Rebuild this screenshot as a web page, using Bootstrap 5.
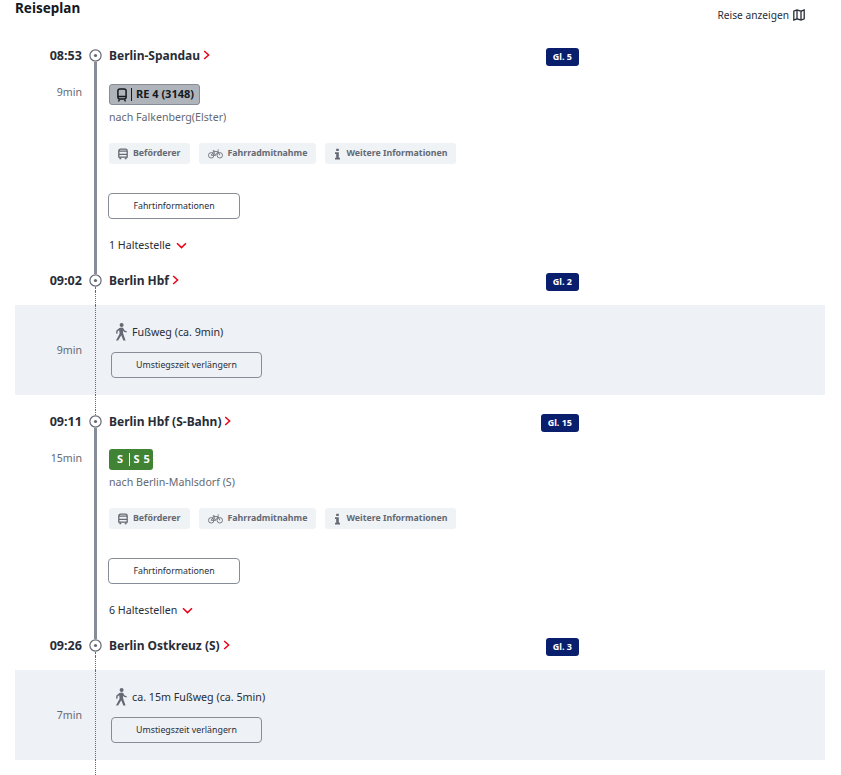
<!DOCTYPE html>
<html lang="de">
<head>
  <meta charset="UTF-8" />
  <title>Reiseplan</title>
  <link href="https://cdn.jsdelivr.net/npm/bootstrap@5.3.0/dist/css/bootstrap.min.css" rel="stylesheet" />
  <style>
    body { font-family: "Noto Sans", "Liberation Sans", sans-serif; font-size: 11px; color: #282d37; background: #fff; overflow: hidden; }
    .plan { width: 841px; height: 775px; overflow: hidden; padding: 0 16px 0 15px; }
    .plan-head { height: 44px; }
    .plan-title { font-size: 13.5px; font-weight: 700; line-height: 17px; margin: 0; color: #131821; }
    .map-link { color: #282d37; font-size: 10.2px; text-decoration: none; padding: 8px 20px 0 0; line-height: 14px; }
    .time-col { width: 67px; flex: none; text-align: right; }
    .rail { width: 27px; flex: none; }
    .rail-solid, .rail-dots { flex: 1 1 0; width: 0; }
    .rail-solid { border-left: 3px solid #878c96; }
    .rail-dots { border-left: 1px dotted #646973; }
    .stop-row { height: 22px; width: 564px; }
    .stop-time { font-size: 12.6px; font-weight: 700; line-height: 24px; }
    .stop-name { font-size: 12px; font-weight: 700; line-height: 22px; padding-top: 2px; }
    .stop-dot { width: 13px; height: 13px; flex: none; }
    .chev { width: 7px; height: 10px; margin-top: -3px; margin-left: -1px; }
    .chev-down { width: 11px; height: 7px; }
    .track { background: #0a1e6e; color: #fff; font-size: 9px; font-weight: 700; height: 18px; line-height: 18px; padding: 0 7px; border-radius: 3px; margin-top: 4px; }
    .leg-row { height: 202px; }
    .leg-row.first-leg { height: 203px; }
    .leg-time { color: #646973; font-size: 10.6px; line-height: 14px; padding-top: 19px; }
    .leg-body { padding-top: 17px; }
    .first-leg .leg-body { padding-top: 18px; }
    .line-tag { height: 21px; font-weight: 700; font-size: 11px; border-radius: 3px; padding: 0 5px 0 7px; }
    .line-re { background: #afb4bb; border: 1px solid #878c96; width: 91px; color: #131821; }
    .line-s { background: #408335; color: #fff; width: 44px; padding: 0 0 0 8px; font-size: 11px; }
    .line-s i { font-style: normal; letter-spacing: .5px; }
    .line-bar { border-left: 1px solid currentColor; height: 13px; margin: 0 4px; }
    .line-s .line-bar { margin: 0 4px 0 5px; }
    .leg-dest { color: #646973; font-size: 10.65px; line-height: 14px; margin-top: 5px; }
    .chips { margin-top: 19px; gap: 9px; }
    .chip { height: 21px; background: #f0f3f5; color: #646973; font-weight: 700; font-size: 8.8px; border-radius: 3px; padding: 0 9px; gap: 5px; }
    .chip svg { flex: none; }
    .plain-btn { display: block; background: #fff; border: 1px solid #878c96; border-radius: 4px; color: #282d37; font-size: 8.8px; height: 26px; line-height: 24px; padding: 0; text-align: center; }
    .plain-btn.info-btn { width: 132px; margin: 29px 0 0 -1px; }
    .stops-toggle { font-size: 10.65px; line-height: 14px; margin-top: 19px; gap: 5px; }
    .gap-dots { height: 14px; }
    .gap-dots.after { height: 15px; }
    .walk-band { height: 90px; background: #eef1f5; }
    .walk-time { color: #646973; font-size: 10.6px; padding-top: 2px; }
    .walk-body { padding: 18px 0 0 2px; }
    .walk-label { font-size: 10.7px; height: 18px; gap: 5px; }
    .walk-btn { width: 151px; background: transparent; margin-top: 11px; }
    .walk-ico { margin-left: 4px; }
  </style>
</head>
<body>
  <svg width="0" height="0" class="d-block">
    <defs>
      <symbol id="ico-stop" viewBox="0 0 13 13"><circle cx="6.5" cy="6.5" r="5.6" fill="#fff" stroke="#646973" stroke-width="1.2"/><circle cx="6.5" cy="6.5" r="1.6" fill="#646973"/></symbol>
      <symbol id="ico-right" viewBox="0 0 7 10"><path d="M1.2 1 5.6 5 1.2 9" fill="none" stroke="#ec0016" stroke-width="1.5"/></symbol>
      <symbol id="ico-down" viewBox="0 0 11 7"><path d="M1 1.200 5.500 5.600 10 1.200" fill="none" stroke="#ec0016" stroke-width="1.5"/></symbol>
      <symbol id="ico-bus" viewBox="0 0 10 12"><path d="M2.500 1.200h5A1.700 1.700 0 0 1 9.200 2.900V9.200H.8V2.900A1.700 1.700 0 0 1 2.500 1.200ZM1 3.200h8M1 6.400h8" fill="none" stroke="#646973" stroke-width="1.300"/><path d="M1.400 9.500h1.800v1.700H1.400ZM6.800 9.500h1.800v1.700H6.800Z" fill="#646973"/></symbol>
      <symbol id="ico-bike" viewBox="0 0 16 10"><g fill="none" stroke="#646973" stroke-width=".9"><circle cx="3.400" cy="6.400" r="2.900"/><circle cx="12.600" cy="6.400" r="2.900"/><path d="M3.400 6.400 6 2.400h4.800l1.800 4M6 2.400 8 6.400h-4.600M10.800 2.400 8 6.400M5 1.500h2M10.200 .8h1.600"/></g></symbol>
      <symbol id="ico-info" viewBox="0 0 7 12"><path d="M2.200 .8h2.600v2.300H2.200ZM1 4.300h3.800v5.400H6V11.400H1V9.700h1.200V6H1Z" fill="#646973"/></symbol>
      <symbol id="ico-walk" viewBox="0 0 12 18"><circle cx="6.600" cy="2.100" r="2" fill="#646973"/><path d="M7 4.600 4.400 5 1.400 7.400l-.4 3.200 1.400.2.300-2.500 1.500-1 .4 3.400L1 17.400h2.100L6.300 12.300l2 5.100h2.300L8.200 10.700 7.900 7.500l1 1.300 2.600.8.300-1.300-2.200-.8-1.500-2.500Z" fill="#646973"/></symbol>
      <symbol id="ico-map" viewBox="0 0 12 12"><path d="M.8 2.200 4 1l4 1.200L11.200 1v8.800L8 11 4 9.800.8 11ZM4 1v8.800M8 2.200V11" fill="none" stroke="#282d37" stroke-width="1.300"/></symbol>
      <symbol id="ico-train" viewBox="0 0 10 14"><rect x=".9" y=".9" width="8.200" height="10.200" rx="2" fill="none" stroke="#131821" stroke-width="1.500"/><path d="M1 8.500h8M2.500 11.500 1.500 13.500M7.500 11.500l1 2" fill="none" stroke="#131821" stroke-width="1.400"/></symbol>
    </defs>
  </svg>

  <main class="plan">
    <div class="plan-head d-flex justify-content-between align-items-start">
      <h2 class="plan-title">Reiseplan</h2>
      <a class="map-link d-flex align-items-center gap-1" href="#">Reise anzeigen <svg width="12" height="12"><use href="#ico-map"/></svg></a>
    </div>

    <!-- Berlin-Spandau -->
    <div class="stop-row d-flex">
      <div class="time-col stop-time">08:53</div>
      <div class="rail d-flex flex-column align-items-center"><span class="flex-grow-1"></span><svg class="stop-dot"><use href="#ico-stop"/></svg><span class="rail-solid"></span></div>
      <div class="flex-grow-1 d-flex justify-content-between">
        <div class="stop-name d-flex align-items-center gap-1">Berlin-Spandau <svg class="chev"><use href="#ico-right"/></svg></div>
        <span class="track">Gl. 5</span>
      </div>
    </div>
    <div class="leg-row first-leg d-flex">
      <div class="time-col leg-time">9min</div>
      <div class="rail d-flex flex-column align-items-center"><span class="rail-solid"></span></div>
      <div class="leg-body">
        <div class="line-tag line-re d-flex align-items-center"><svg width="10" height="14"><use href="#ico-train"/></svg><span class="line-bar"></span>RE 4 (3148)</div>
        <div class="leg-dest">nach Falkenberg(Elster)</div>
        <div class="chips d-flex">
          <div class="chip d-flex align-items-center"><svg width="10" height="12"><use href="#ico-bus"/></svg>Beförderer</div>
          <div class="chip d-flex align-items-center"><svg width="15" height="10"><use href="#ico-bike"/></svg>Fahrradmitnahme</div>
          <div class="chip d-flex align-items-center"><svg width="7" height="12"><use href="#ico-info"/></svg>Weitere Informationen</div>
        </div>
        <button class="plain-btn info-btn" type="button">Fahrtinformationen</button>
        <div class="stops-toggle d-flex align-items-center">1 Haltestelle <svg class="chev-down"><use href="#ico-down"/></svg></div>
      </div>
    </div>

    <!-- Berlin Hbf -->
    <div class="stop-row d-flex">
      <div class="time-col stop-time">09:02</div>
      <div class="rail d-flex flex-column align-items-center"><span class="rail-solid"></span><svg class="stop-dot"><use href="#ico-stop"/></svg><span class="rail-dots"></span></div>
      <div class="flex-grow-1 d-flex justify-content-between">
        <div class="stop-name d-flex align-items-center gap-1">Berlin Hbf <svg class="chev"><use href="#ico-right"/></svg></div>
        <span class="track">Gl. 2</span>
      </div>
    </div>
    <div class="gap-dots d-flex">
      <div class="time-col"></div>
      <div class="rail d-flex flex-column align-items-center"><span class="rail-dots"></span></div>
    </div>
    <div class="walk-band d-flex">
      <div class="time-col walk-time align-self-center">9min</div>
      <div class="rail d-flex flex-column align-items-center"><span class="rail-dots"></span></div>
      <div class="walk-body">
        <div class="walk-label d-flex align-items-center"><svg width="12" height="18" class="walk-ico"><use href="#ico-walk"/></svg>Fußweg (ca. 9min)</div>
        <button class="plain-btn walk-btn" type="button">Umstiegszeit verlängern</button>
      </div>
    </div>
    <div class="gap-dots after d-flex">
      <div class="time-col"></div>
      <div class="rail d-flex flex-column align-items-center"><span class="rail-dots"></span></div>
    </div>

    <!-- Berlin Hbf (S-Bahn) -->
    <div class="stop-row d-flex">
      <div class="time-col stop-time">09:11</div>
      <div class="rail d-flex flex-column align-items-center"><span class="rail-dots"></span><svg class="stop-dot"><use href="#ico-stop"/></svg><span class="rail-solid"></span></div>
      <div class="flex-grow-1 d-flex justify-content-between">
        <div class="stop-name d-flex align-items-center gap-1">Berlin Hbf (S-Bahn) <svg class="chev"><use href="#ico-right"/></svg></div>
        <span class="track">Gl. 15</span>
      </div>
    </div>
    <div class="leg-row d-flex">
      <div class="time-col leg-time">15min</div>
      <div class="rail d-flex flex-column align-items-center"><span class="rail-solid"></span></div>
      <div class="leg-body">
        <div class="line-tag line-s d-flex align-items-center"><i>S</i><span class="line-bar"></span><i>S 5</i></div>
        <div class="leg-dest">nach Berlin-Mahlsdorf (S)</div>
        <div class="chips d-flex">
          <div class="chip d-flex align-items-center"><svg width="10" height="12"><use href="#ico-bus"/></svg>Beförderer</div>
          <div class="chip d-flex align-items-center"><svg width="15" height="10"><use href="#ico-bike"/></svg>Fahrradmitnahme</div>
          <div class="chip d-flex align-items-center"><svg width="7" height="12"><use href="#ico-info"/></svg>Weitere Informationen</div>
        </div>
        <button class="plain-btn info-btn" type="button">Fahrtinformationen</button>
        <div class="stops-toggle d-flex align-items-center">6 Haltestellen <svg class="chev-down"><use href="#ico-down"/></svg></div>
      </div>
    </div>

    <!-- Berlin Ostkreuz (S) -->
    <div class="stop-row d-flex">
      <div class="time-col stop-time">09:26</div>
      <div class="rail d-flex flex-column align-items-center"><span class="rail-solid"></span><svg class="stop-dot"><use href="#ico-stop"/></svg><span class="rail-dots"></span></div>
      <div class="flex-grow-1 d-flex justify-content-between">
        <div class="stop-name d-flex align-items-center gap-1">Berlin Ostkreuz (S) <svg class="chev"><use href="#ico-right"/></svg></div>
        <span class="track">Gl. 3</span>
      </div>
    </div>
    <div class="gap-dots d-flex">
      <div class="time-col"></div>
      <div class="rail d-flex flex-column align-items-center"><span class="rail-dots"></span></div>
    </div>
    <div class="walk-band d-flex">
      <div class="time-col walk-time align-self-center">7min</div>
      <div class="rail d-flex flex-column align-items-center"><span class="rail-dots"></span></div>
      <div class="walk-body">
        <div class="walk-label d-flex align-items-center"><svg width="12" height="18" class="walk-ico"><use href="#ico-walk"/></svg>ca. 15m Fußweg (ca. 5min)</div>
        <button class="plain-btn walk-btn" type="button">Umstiegszeit verlängern</button>
      </div>
    </div>
    <div class="gap-dots after d-flex">
      <div class="time-col"></div>
      <div class="rail d-flex flex-column align-items-center"><span class="rail-dots"></span></div>
    </div>
  </main>
</body>
</html>
